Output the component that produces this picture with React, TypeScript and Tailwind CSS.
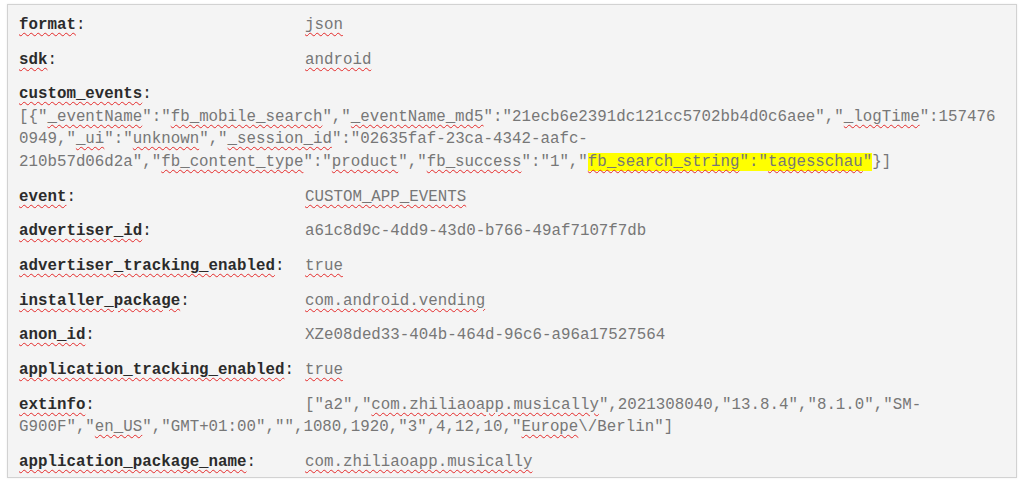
import React from "react";

const U = ({ children }: { children: React.ReactNode }) => (
  <span className="underline decoration-wavy decoration-[#e42a2a] decoration-1 underline-offset-[3px]">
    {children}
  </span>
);

const Label = ({ children }: { children: React.ReactNode }) => (
  <span className="inline-block w-[286px] text-[#2b2b2b]">
    <b className="font-bold">
      <U>{children}</U>
    </b>
    :
  </span>
);

const Row = ({
  label,
  children,
  last,
}: {
  label: string;
  children: React.ReactNode;
  last?: boolean;
}) => (
  <p className={last ? "" : "mb-[12.2px]"}>
    <Label>{label}</Label>
    <span className="text-[#777777]">{children}</span>
  </p>
);

export default function App() {
  return (
    <div className="w-[1024px] h-[481px] bg-white pt-[4px] pl-[7px]">
      <div
        className="w-[1010px] h-[474px] border border-[#d2d2d2] bg-[#f4f4f4] pl-[11px] pt-[9px] text-[15.8px] leading-[22.5px] text-[#777777] shadow-[0_0_2px_rgba(0,0,0,0.08)]"
        style={{ fontFamily: '"Liberation Mono", "Courier New", monospace' }}
      >
        <Row label="format">
          <U>json</U>
        </Row>
        <Row label="sdk">
          <U>android</U>
        </Row>
        <p className="mb-[12.2px]">
          <span className="text-[#2b2b2b]">
            <b className="font-bold">
              <U>custom_events</U>
            </b>
            :
          </span>
          <br />
          <span className="whitespace-nowrap">
            [{"{"}"<U>_eventName</U>":"<U>fb_mobile_search</U>","<U>_eventName_md5</U>":"21ecb6e2391dc121cc5702bb4d0c6aee","<U>_logTime</U>":157476
          </span>
          <br />
          <span className="whitespace-nowrap">
            0949,"<U>_ui</U>":"<U>unknown</U>","<U>_session_id</U>":"02635faf-23ca-4342-aafc-
          </span>
          <br />
          <span className="whitespace-nowrap">
            210b57d06d2a","<U>fb_content_type</U>":"<U>product</U>","<U>fb_success</U>":"1","
            <span className="bg-[#ffff00]">
              <U>fb_search_string</U>":"<U>tagesschau</U>"
            </span>
            {"}"}]
          </span>
        </p>
        <Row label="event">
          <U>CUSTOM_APP_EVENTS</U>
        </Row>
        <Row label="advertiser_id">a61c8d9c-4dd9-43d0-b766-49af7107f7db</Row>
        <Row label="advertiser_tracking_enabled">
          <U>true</U>
        </Row>
        <Row label="installer_package">
          <U>com.android.vending</U>
        </Row>
        <Row label="anon_id">XZe08ded33-404b-464d-96c6-a96a17527564</Row>
        <Row label="application_tracking_enabled">
          <U>true</U>
        </Row>
        <p className="mb-[12.2px]">
          <Label>extinfo</Label>
          <span className="text-[#777777]">
            <span className="whitespace-nowrap">
              ["a2","<U>com.zhiliaoapp.musically</U>",2021308040,"13.8.4","8.1.0","SM-
            </span>
            <br />
            <span className="whitespace-nowrap">
              G900F","<U>en_US</U>","GMT+01:00","",1080,1920,"3",4,12,10,"<U>Europe</U>\/Berlin"]
            </span>
          </span>
        </p>
        <Row label="application_package_name" last>
          <U>com.zhiliaoapp.musically</U>
        </Row>
      </div>
    </div>
  );
}
